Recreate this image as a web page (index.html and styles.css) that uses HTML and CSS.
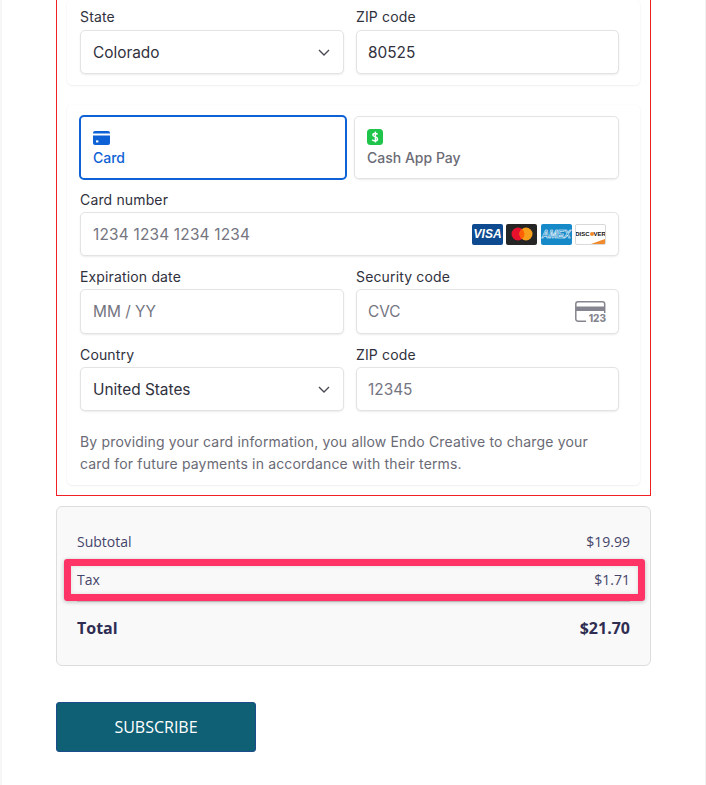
FILE: index.html

```html
<!DOCTYPE html>
<html lang="en">
<head>
    <meta charset="UTF-8">
    <title>Checkout</title>
    <link rel="stylesheet" href="styles.css">
</head>

<body>
    <div class="page">
        <!-- payment element -->
        <div class="frame">
            <div class="card card-address">
                <div class="row">
                    <div class="field">
                        <div class="label">State</div>
                        <div class="input select">
                            <span class="value">Colorado</span>
                            <svg class="chevron" width="12" height="7" viewBox="0 0 12 7"><path d="M1 1l5 5 5-5" fill="none" stroke="#4a4a55" stroke-width="1.4"/></svg>
                        </div>
                    </div>
                    <div class="field">
                        <div class="label">ZIP code</div>
                        <div class="input"><span class="value">80525</span></div>
                    </div>
                </div>
            </div>

            <div class="card card-payment">
                <div class="tabs">
                    <div class="tab tab-active">
                        <svg class="tab-icon" width="17" height="14" viewBox="0 0 17 14">
                            <path d="M2 0h13a2 2 0 0 1 2 2v.6H0V2a2 2 0 0 1 2-2z" fill="#0f62d6"/>
                            <path d="M0 4.4h17V12a2 2 0 0 1-2 2H2a2 2 0 0 1-2-2z" fill="#0f62d6"/>
                            <rect x="3" y="9.4" width="2.4" height="2" fill="#fff"/>
                        </svg>
                        <span>Card</span>
                    </div>
                    <div class="tab">
                        <svg class="tab-icon" width="16" height="16" viewBox="0 0 16 16">
                            <rect width="16" height="16" rx="3.5" fill="#1ec54a"/>
                            <path d="M10.6 5.4C10 4.8 9 4.4 8 4.4c-1.2 0-2.1.6-2.1 1.6 0 2.1 4.6 1.2 4.6 3.9 0 1.1-1 1.9-2.5 1.9-1.1 0-2.1-.4-2.8-1.1" fill="none" stroke="#fff" stroke-width="1.5"/>
                            <path d="M8.4 2.6v10.8" stroke="#fff" stroke-width="1.4"/>
                        </svg>
                        <span>Cash App Pay</span>
                    </div>
                </div>

                <div class="field">
                    <div class="label">Card number</div>
                    <div class="input">
                        <span class="placeholder card-num">1234 1234 1234 1234</span>
                        <div class="brands">
                            <div class="brand brand-visa">VISA</div>
                            <div class="brand brand-mc">
                                <svg width="26" height="16" viewBox="0 0 26 16">
                                    <circle cx="9" cy="8" r="6.5" fill="#e8112d"/>
                                    <circle cx="17" cy="8" r="6.5" fill="#f79e1b"/>
                                    <path d="M13 2.9a6.5 6.5 0 0 1 0 10.2 6.5 6.5 0 0 1 0-10.2z" fill="#ff5f00"/>
                                </svg>
                            </div>
                            <div class="brand brand-amex">AMEX</div>
                            <div class="brand brand-discover">
                                <span>DISC<i class="dot"></i>VER</span>
                            </div>
                        </div>
                    </div>
                </div>

                <div class="row">
                    <div class="field">
                        <div class="label">Expiration date</div>
                        <div class="input input-tall"><span class="placeholder">MM / YY</span></div>
                    </div>
                    <div class="field">
                        <div class="label">Security code</div>
                        <div class="input input-tall">
                            <span class="placeholder">CVC</span>
                            <div class="cvc">
                                <svg width="31" height="21" viewBox="0 0 31 21">
                                    <path d="M11 20.2H3a2.2 2.2 0 0 1-2.2-2.2V3A2.2 2.2 0 0 1 3 .8h24.5A2.2 2.2 0 0 1 29.7 3v9" fill="none" stroke="#85858f" stroke-width="1.5"/>
                                    <rect x="1" y="5.5" width="29" height="4.5" fill="#85858f"/>
                                </svg>
                                <span class="cvc-num">123</span>
                            </div>
                        </div>
                    </div>
                </div>

                <div class="row">
                    <div class="field">
                        <div class="label">Country</div>
                        <div class="input select">
                            <span class="value">United States</span>
                            <svg class="chevron" width="12" height="7" viewBox="0 0 12 7"><path d="M1 1l5 5 5-5" fill="none" stroke="#4a4a55" stroke-width="1.4"/></svg>
                        </div>
                    </div>
                    <div class="field">
                        <div class="label">ZIP code</div>
                        <div class="input"><span class="placeholder">12345</span></div>
                    </div>
                </div>

                <p class="terms">By providing your card information, you allow Endo Creative to charge your card for future payments in accordance with their terms.</p>
            </div>
        </div>

        <!-- totals -->
        <div class="summary">
            <div class="line"><span>Subtotal</span><span>$19.99</span></div>
            <div class="line line-tax"><span>Tax</span><span>$1.71</span><div class="highlight"></div></div>
            <div class="line line-total"><span>Total</span><span>$21.70</span></div>
        </div>

        <button class="subscribe">SUBSCRIBE</button>
    </div>
</body>
</html>
```

FILE: styles.css

```css
* {
    box-sizing: border-box;
}
html, body {
    height: 100%;
}
body {
    margin: 0;
    background: #fff;
    border-left: 2px solid #f6f6f6;
    border-right: 1px solid #f1f1f1;
    overflow: hidden;
}
.page {
    width: 595px;
    margin-left: 54px;
}
.frame {
    border: 1px solid #f01f24;
    border-top: none;
    padding: 0 10px 9px;
    height: 496px;
    font-family: Inter, sans-serif;
}
.card {
    background: #fff;
    border-radius: 5px;
    box-shadow: 0 1px 2px rgba(0,0,0,0.05), 0 0 3px rgba(0,0,0,0.04);
    padding: 0 21px 0 13px;
}
.card-address {
    height: 85px;
    padding-top: 8px;
    clip-path: inset(0 -6px -6px -6px);
}
.card-payment {
    height: 380px;
    margin-top: 20px;
    padding-top: 10px;
}
.row {
    display: grid;
    grid-template-columns: 264px 263px;
    gap: 12px;
}
.row .field:last-child .input {
    padding-left: 11px;
}
.card-payment .row {
    margin-top: 12px;
}
.label {
    font-size: 14px;
    line-height: 17px;
    letter-spacing: 0.15px;
    color: #30313d;
    margin-bottom: 5px;
}
.card-payment .label {
    margin-bottom: 4px;
}
.input {
    height: 44px;
    padding: 0 12px;
    display: flex;
    align-items: center;
    justify-content: space-between;
    background: #fff;
    border: 1px solid #e3e3e6;
    border-radius: 5px;
    box-shadow: 0 1px 2px rgba(0,0,0,0.08);
    font-size: 15.4px;
}
.input-tall {
    height: 45px;
    padding-bottom: 1px;
}
.value {
    color: #30313d;
}
.placeholder {
    color: #75757f;
}
.card-num {
    letter-spacing: 0.2px;
}
.chevron {
    margin-right: 1px;
}
.tabs {
    display: flex;
    gap: 7px;
    margin-bottom: 11px;
}
.tab {
    width: 265px;
    height: 63px;
    margin-top: 1px;
    padding: 12px 12px 0;
    display: flex;
    flex-direction: column;
    align-items: flex-start;
    border: 1px solid #e3e3e6;
    border-radius: 5px;
    box-shadow: 0 1px 2px rgba(0,0,0,0.08);
    font-size: 14px;
    font-weight: 500;
    color: #6b6b76;
}
.tab-active {
    width: 268px;
    height: 65px;
    margin-top: 0;
    margin-left: -1px;
    border: 2px solid #0f62d6;
    color: #0f62d6;
    box-shadow: none;
}
.tab-active .tab-icon {
    margin-top: 2px;
}
.tab-icon {
    margin-bottom: 4px;
    display: block;
}
.brands {
    display: flex;
    gap: 3.3px;
}
.brand {
    width: 31px;
    height: 21px;
    border-radius: 2px;
    display: flex;
    align-items: center;
    justify-content: center;
    overflow: hidden;
}
.brand-visa {
    background: #0e4a8f;
    color: #fff;
    font-family: "Liberation Sans", sans-serif;
    font-weight: bold;
    font-style: italic;
    font-size: 12px;
}
.brand-mc {
    background: #252525;
}
.brand-amex {
    background: #1689c9;
    color: #1689c9;
    -webkit-text-stroke: 0.5px #fff;
    font-family: "Liberation Sans", sans-serif;
    font-weight: bold;
    font-style: italic;
    font-size: 10px;
}
.brand-discover {
    position: relative;
    background: #fff;
    border: 1px solid #d9d9d9;
    color: #111;
    font-family: "Liberation Sans", sans-serif;
    font-weight: bold;
    font-size: 6px;
    white-space: nowrap;
}
.brand-discover::after {
    content: "";
    position: absolute;
    right: 0;
    bottom: 0;
    border-style: solid;
    border-width: 0 0 5px 14px;
    border-color: transparent transparent #f08a2c transparent;
}
.dot {
    display: inline-block;
    width: 4px;
    height: 4px;
    border-radius: 50%;
    background: #f08a2c;
}
.cvc {
    position: relative;
    width: 31px;
    height: 21px;
}
.cvc svg {
    display: block;
}
.cvc-num {
    position: absolute;
    right: 0;
    bottom: -1px;
    font-size: 10px;
    font-weight: 800;
    line-height: 10px;
    color: #85858f;
    background: #fff;
    padding-left: 1px;
}
.terms {
    margin: 20px 0 0;
    font-size: 14px;
    line-height: 22px;
    letter-spacing: 0.16px;
    color: #6a6a75;
}
.summary {
    height: 160px;
    margin-top: 10px;
    padding: 23px 20px 0;
    background: #f9f9f9;
    border: 1px solid #ddd;
    border-radius: 6px;
    font-family: "Open Sans", sans-serif;
    font-size: 14px;
    color: #45446a;
}
.line {
    display: flex;
    justify-content: space-between;
    align-items: center;
    height: 22px;
}
.line-tax {
    position: relative;
    margin-top: 16px;
    height: 34px;
    align-items: flex-start;
    line-height: 23px;
    border-bottom: 1px solid #d8d8d8;
}
.highlight {
    position: absolute;
    left: -13px;
    right: -15px;
    top: -9px;
    bottom: 0;
    border: 7px solid #ff3366;
    border-radius: 3px;
    box-shadow: 0 1px 4px rgba(0,0,0,0.25), inset 0 0 4px rgba(0,0,0,0.12);
}
.line-total {
    margin-top: 15px;
    font-size: 16px;
    font-weight: 700;
    color: #2f2d52;
}
.subscribe {
    display: block;
    width: 200px;
    height: 50px;
    margin-top: 36px;
    padding-bottom: 1px;
    background: #0f5f75;
    border: 1px solid #1b4d8c;
    border-radius: 3px;
    color: #fff;
    font-family: "Open Sans", sans-serif;
    font-size: 16px;
}
```
